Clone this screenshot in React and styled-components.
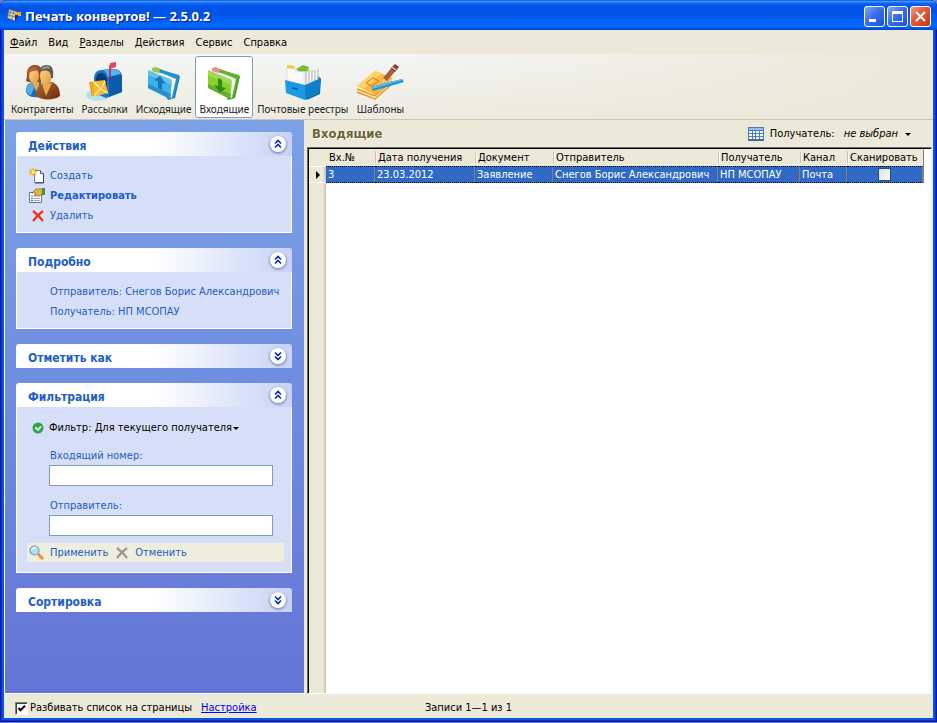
import { useState } from "react";
import styled, { createGlobalStyle } from "styled-components";

const UI_FONT = '"DejaVu Sans Condensed", "DejaVu Sans", sans-serif';
const BEIGE = "#ece9d8";
const LINK_BLUE = "#215dc6";

const GlobalStyle = createGlobalStyle`
  * {
    box-sizing: border-box;
  }
  body {
    margin: 0;
    background: #6f7bc4;
    font-family: ${UI_FONT};
    font-size: 11px;
    line-height: 16px;
    color: #000;
  }
  button, input {
    font: inherit;
    color: inherit;
    margin: 0;
  }
  button {
    border: 0;
    padding: 0;
    background: none;
    white-space: nowrap;
  }
`;

const Window = styled.div`
  display: flex;
  flex-direction: column;
  min-height: calc(100vh - 1px);
  padding: 0 4px 4px;
  border-radius: 7px 7px 0 0;
  overflow: hidden;
  background: #0855dd;
  box-shadow: inset 0 0 0 1px #0019a8, inset 0 0 0 2px #0831d9, inset 0 0 0 3px #0a52e8;
`;

const TitleBar = styled.header`
  display: flex;
  align-items: center;
  gap: 3px;
  height: 30px;
  margin: 0 -4px;
  padding: 2px 6px 0 6px;
  background: linear-gradient(#0a4fd8 0%, #3f95ff 5%, #0a62f5 12%, #0054e3 25%, #0055e8 50%, #0066ff 78%, #0064fa 90%, #0043cf 100%);
`;

const Title = styled.h1`
  flex: 1;
  margin: 0;
  font-family: "Noto Sans", sans-serif;
  font-size: 13px;
  font-weight: bold;
  color: #fff;
  text-shadow: 1px 1px 1px #0a1883;
`;

const Captions = styled.div`
  display: flex;
  gap: 2px;
`;

const CaptionButton = styled.button`
  width: 21px;
  height: 21px;
  border: 1px solid #fff;
  border-radius: 3px;
  background: ${props => props.$close
    ? "linear-gradient(135deg, #f0a088 0%, #e25a34 40%, #c93a10 100%)"
    : "linear-gradient(135deg, #86a8f4 0%, #3a6ef0 45%, #1c4fd8 100%)"};
  svg {
    display: block;
  }
`;

const MenuBar = styled.nav`
  display: flex;
  align-items: center;
  gap: 11px;
  height: 24px;
  padding: 1px 6px 0;
  background: ${BEIGE};
`;

const ToolBar = styled.div`
  display: flex;
  height: 66px;
  padding: 2px 3px 0;
  background: linear-gradient(90deg, rgba(236, 233, 216, 0) 40%, ${BEIGE} 100%), linear-gradient(#f4f5f6, #edebdf);
  border-bottom: 1px solid #c9c6b4;
`;

const ToolButton = styled.button`
  display: flex;
  flex-direction: column;
  align-items: center;
  height: 62px;
  padding: 5px 3px 0;
  border: 1px solid ${props => props.$active ? "#7f9db9" : "transparent"};
  border-radius: 3px;
  background: ${props => props.$active ? "#fff" : "none"};
  font-family: "Noto Sans", sans-serif;
  font-size: 10px;
  line-height: 14px;
  color: #222;
  svg {
    flex: none;
  }
`;

const Body = styled.div`
  flex: 1;
  display: flex;
  background: ${BEIGE};
`;

const Sidebar = styled.aside`
  flex: none;
  display: flex;
  flex-direction: column;
  gap: 15px;
  width: 300px;
  padding: 12px 12px 12px 11px;
  border-left: 1px solid #fff;
  border-bottom: 1px solid #fff;
  background: linear-gradient(#7ba2e7, #6375d6);
`;

const PanelHead = styled.div`
  display: flex;
  align-items: center;
  justify-content: space-between;
  height: 24px;
  padding: 0 6px 0 12px;
  border-radius: 3px 3px 0 0;
  background: linear-gradient(90deg, #fff 50%, #c6d3f7);
`;

const PanelTitle = styled.h2`
  margin: 0;
  padding-top: 3px;
  font-size: 12px;
  font-weight: bold;
  color: ${LINK_BLUE};
`;

const Chevron = styled.button`
  width: 16px;
  height: 16px;
  border-radius: 50%;
  background: #fff;
  box-shadow: 0 1px 2px 1px rgba(80, 90, 150, 0.5);
  svg {
    display: block;
    transform: ${props => props.$open ? "none" : "rotate(180deg)"};
  }
`;

const PanelBody = styled.div`
  padding: 10px 7px 6px 12px;
  border: 1px solid #fff;
  border-top: 0;
  background: #d6dff7;
  color: ${LINK_BLUE};
`;

const TaskLink = styled.a`
  display: grid;
  grid-template-columns: 21px 1fr;
  align-items: center;
  height: 20px;
  color: ${LINK_BLUE};
  font-weight: ${props => props.$bold ? "bold" : "normal"};
  text-decoration: none;
`;

const TaskCross = styled.span`
  display: flex;
  justify-content: center;
  width: 18px;
`;

const Detail = styled.div`
  height: 20px;
  padding-left: 21px;
  line-height: 20px;
  white-space: nowrap;
`;

const FilterButton = styled.button`
  display: grid;
  grid-template-columns: 19px auto auto;
  align-items: center;
  height: 20px;
  margin-top: 1px;
  padding-left: 1px;
  color: #000;
`;

const Field = styled.label`
  display: block;
  padding: 9px 11px 2px 20px;
`;

const TextInput = styled.input`
  display: block;
  width: 100%;
  height: 21px;
  margin-top: 1px;
  padding: 0 3px;
  border: 1px solid #7f9db9;
  background: #fff;
`;

const FieldCaption = styled.span`
  display: block;
  padding: 1px 0 0 1px;
`;

const FilterBar = styled.div`
  display: flex;
  align-items: center;
  gap: 6px;
  height: 19px;
  margin: 5px 0 4px -2px;
  padding: 0 2px;
  background: #efedde;
`;

const BarButton = styled.button`
  display: flex;
  align-items: center;
  gap: 5px;
`;

const Main = styled.main`
  flex: 1;
  display: flex;
  flex-direction: column;
  min-width: 0;
  padding: 0 1px 0 3px;
`;

const MainHead = styled.div`
  display: flex;
  align-items: center;
  height: 27px;
  padding: 0 20px 0 5px;
`;

const MainTitle = styled.h2`
  flex: 1;
  margin: 0;
  font-size: 13px;
  font-weight: bold;
  color: #6b6434;
  text-shadow: 1px 1px 0 #fff;
`;

const Recipient = styled.button`
  display: flex;
  align-items: center;
  gap: 6px;
  em {
    margin-left: 3px;
  }
`;

const GridBox = styled.div`
  flex: 1;
  border: 1px solid;
  border-color: #716f64 #f1efe2 #fff #716f64;
  background: #fff;
`;

const GridInner = styled.div`
  height: 100%;
  border-left: 1px solid #000;
  border-top: 1px solid #000;
  background: linear-gradient(90deg, ${BEIGE} 14px, #c4c1b0 17px, #fff 17px);
`;

const Table = styled.table`
  width: 614px;
  table-layout: fixed;
  border-collapse: separate;
  border-spacing: 0;
  border-right: 1px solid #808080;
  th, td {
    height: 17px;
    padding: 0 0 0 3px;
    font-weight: normal;
    text-align: left;
    white-space: nowrap;
    line-height: 15px;
  }
  thead tr {
    background: ${BEIGE};
  }
  th + th + th {
    background: linear-gradient(#fff, #fff) 1px 2px / 1px 12px no-repeat, linear-gradient(#c8c5b2, #c8c5b2) 0 2px / 1px 12px no-repeat;
  }
`;

const Selector = styled.td`
  border-top: 1px solid #fff;
  border-bottom: 1px solid #fff;
  && {
    padding: 0 0 0 7px;
  }
  svg {
    display: block;
  }
`;

const Cell = styled.td`
  background: #316ac5;
  color: #fff;
  border-top: 1px dotted #000;
  border-bottom: 1px dotted #000;
  border-right: 1px solid #808080;
  && {
    padding-left: ${props => props.$center ? 0 : 2}px;
    text-align: ${props => props.$center ? "center" : "left"};
  }
`;

const ScanBox = styled.input`
  appearance: none;
  display: block;
  width: 13px;
  height: 13px;
  && {
    margin: 0 auto;
  }
  border: 1px solid #1c5180;
  background: linear-gradient(135deg, #dcdcd7, #fff);
`;

const StatusBar = styled.footer`
  display: grid;
  grid-template-columns: 1fr auto 1fr;
  align-items: center;
  height: 24px;
  padding: 4px 11px 0;
  background: ${BEIGE};
`;

const StatusLeft = styled.div`
  display: flex;
  gap: 9px;
  a {
    color: #00f;
  }
`;

const PageToggle = styled.label`
  display: flex;
  align-items: center;
  gap: 2px;
`;

const PageCheck = styled.input`
  appearance: none;
  width: 13px;
  height: 13px;
  border: 1px solid;
  border-color: #808080 #fff #fff #808080;
  box-shadow: inset 1px 1px 0 #404040;
  background: #fff;
  &:checked {
    background: #fff url("data:image/svg+xml,%3Csvg xmlns='http://www.w3.org/2000/svg' viewBox='0 0 11 11'%3E%3Cpath d='M2.5 5l2 2.3L9 2.8' fill='none' stroke='%23000' stroke-width='2'/%3E%3C/svg%3E");
  }
`;

function ContactsIcon() {
  return (
    <svg width="40" height="40" viewBox="0 0 40 40">
      <defs>
        <linearGradient id="suit" x1="0" x2="1" y2="1"><stop stopColor="#b0683a" /><stop offset="1" stopColor="#6b2c0c" /></linearGradient>
        <linearGradient id="skin" x1="0" x2="1" y2="1"><stop stopColor="#ffd88a" /><stop offset="1" stopColor="#e29a3c" /></linearGradient>
      </defs>
      <path d="M4 30c0-6 2-9 6-10l9 0v15c-6 1-13 0-15-5z" fill="#1b6eb4" />
      <path d="M4 29c1-5 3-8 6-9l2 6-3 7c-3-1-4-2-5-4z" fill="#58aee4" />
      <path d="M10 20l7-1v9l-3 1z" fill="#e9a84e" />
      <path d="M4 18c1-2 1-5 1-8 1-5 4-7 8-7 5 0 7 3 7 8v9H7c-2 0-3-1-3-2z" fill="#9c4d22" />
      <ellipse cx="12" cy="14" rx="5" ry="7" fill="url(#skin)" />
      <path d="M6 12c0-5 3-7 7-7l4 4c-4-1-8 0-11 3z" fill="#b9652f" />
      <path d="M14 34c0-7 3-12 7-13l9-1c6 2 8 8 8 14-5 4-18 5-24 0z" fill="url(#suit)" />
      <path d="M20 22l4 12 6-13z" fill="#e9a84e" />
      <ellipse cx="24" cy="14" rx="6" ry="9" fill="url(#skin)" />
      <path d="M17 11c0-5 3-8 8-8 5 0 7 4 6 13h-2c0-4-1-6-3-7-3-1-6-1-9 2z" fill="#5c5d5b" />
      <path d="M19 8c1-3 4-4 7-4 2 1 2 2 2 3-3-1-6 0-9 1z" fill="#94958f" />
    </svg>
  );
}

function MailboxIcon() {
  return (
    <svg width="40" height="40" viewBox="0 0 40 40">
      <ellipse cx="13" cy="33" rx="12" ry="6" fill="#b4e0f4" />
      <path d="M9 17c0-6 3-9 8-9l13-1c5 1 7 4 7 9v14l-16 6-12-5z" fill="#1677c2" />
      <path d="M17 8l13-1c5 1 7 4 7 9v14l-13 5V17c0-5-3-8-7-9z" fill="#0d5ba8" />
      <path d="M18 8l12-1c3 1 5 2 6 5l-13 3c-1-4-3-6-5-7z" fill="#55b4ea" />
      <path d="M11 18c0-4 2-7 5-7s6 3 6 8v12l-11-3z" fill="#083a75" />
      <path d="M4 20l16-2 3 13-16 4z" fill="#f9b72c" />
      <path d="M9 20l7 7 4-8M8 35l7-8 8 4" fill="none" stroke="#fff0b8" strokeWidth="1.2" />
      <path d="M5 20l2 14M7 20l2 14" stroke="#d98d12" strokeWidth=".7" />
      <path d="M25 3v14" stroke="#c6103d" strokeWidth="1.4" />
      <path d="M25 1l6-1v5l-6 2z" fill="#f04066" />
    </svg>
  );
}

function BookIcon({ light, mid, dark, tab, down }) {
  return (
    <svg width="40" height="40" viewBox="0 0 40 40">
      <path d="M8 6l10 2 18 6-5 22-7 2z" fill={dark} />
      <path d="M9 9l24 6-5 21-5-2z" fill="#f5fafc" stroke="#b4c4ca" strokeWidth=".6" />
      <path d="M11 5l10 4 14 4-5 22-2 1 4-19-21-9z" fill={mid} />
      <path d="M8 6l4-1 4 3-1 3-7-2z" fill={tab} />
      <path d="M4 8l22 9c1 0 2 1 2 3l-2 17L4 26z" fill={light} />
      <path d="M4 8l22 9c1 0 2 1 2 3v3L4 13z" fill="#fff" opacity=".2" />
      <path d="M4 22l23 10-1 5L4 26z" fill={mid} />
      <path
        d={down ? "M14 16l4 2v7l4 1-6 5-6-8 4 1z" : "M16 14l6 8-4-1v7l-4-2v-7l-4-1z"}
        fill={down ? "#2f8c1b" : "#1478bd"}
      />
    </svg>
  );
}

function RegistryIcon() {
  return (
    <svg width="40" height="40" viewBox="0 0 40 40">
      <path d="M18 22l17-8 3 3-1 15-13 6z" fill="#0a6eb5" />
      <path d="M21 9l14-2v15l-14 4z" fill="#f3f4f4" />
      <path d="M23 9v15M26 8v15M29 8v14M32 8v13M35 7v13" stroke="#aeb4b8" strokeWidth="1" />
      <path d="M13 7l7-4 6 2-1 4-9 1z" fill="#78bd35" />
      <path d="M4 4l8 1v4l9 1v15H4z" fill="#fafafa" stroke="#c7cacc" strokeWidth=".5" />
      <path d="M4 3l7 1v3l-7-1z" fill="#f8c72c" />
      <path d="M2 18l20 5v15L3 31z" fill="#1c9be4" />
      <path d="M22 23l16-7-2 15-14 7z" fill="#0f7fca" />
      <path d="M9 26l6 1" stroke="#075c99" strokeWidth="1.3" />
    </svg>
  );
}

function TemplatesIcon() {
  return (
    <svg width="48" height="40" viewBox="0 0 48 40">
      <path d="M1 25l1 6 17 7 17-16v-6z" fill="#fff4cc" />
      <path d="M1 27l18 7 17-15M1 30l18 7 17-15" fill="none" stroke="#e69525" strokeWidth="1.5" />
      <path d="M1 24l18-15 18 7-18 17z" fill="#f9b939" />
      <path d="M1 24l18-15 7 2-18 16z" fill="#ffd168" />
      <path d="M10 21l7-5 6 3-7 5z" fill="none" stroke="#c77c16" />
      <path d="M25 22l2-6 10-12 4 3-10 12z" fill="#a95b42" />
      <path d="M35 6l4-4 4 3-4 5z" fill="#8c3b38" />
      <path d="M36 5l4 3" stroke="#e2d2c8" strokeWidth="1.2" />
      <path d="M25 22l2-6 4 3z" fill="#f0cf9e" />
      <path d="M15 25l31-8 2 3-31 9z" fill="#1b94dd" />
      <path d="M15 25l31-8 1 1-31 9z" fill="#58bdf2" />
    </svg>
  );
}

function AppIcon() {
  return (
    <svg width="16" height="16" viewBox="0 0 16 16">
      <path d="M3 1l9 3-3 9-8-3z" fill="#d8d5cc" stroke="#56534f" strokeWidth=".8" />
      <path d="M3 4l7 2M2 7l7 2M5 2L3 9M8 3l-2 8" stroke="#77746e" strokeWidth=".8" />
      <path d="M10 4h5v4h-5z" fill="#f5a72e" />
      <path d="M9 7h3l-3 6z" fill="#222" />
    </svg>
  );
}

function NewIcon() {
  return (
    <svg width="16" height="16" viewBox="0 0 16 16">
      <path d="M5.500 2.500h6l3 3v9h-9z" fill="#fff" stroke="#6f7f9a" />
      <path d="M14.500 6v9H6" fill="none" stroke="#33425c" />
      <path d="M11.500 2.500v3h3" fill="#dde6f3" stroke="#4c5d7c" />
      <path d="M4 0v8M0 4h8M1 1l6 6M7 1L1 7" stroke="#e8bd1c" strokeWidth="1.4" />
      <circle cx="4" cy="4" r="1.500" fill="#fff7b0" />
    </svg>
  );
}

function EditIcon() {
  return (
    <svg width="16" height="16" viewBox="0 0 16 16">
      <path d="M.5 4.500h12v10H.5z" fill="#fff" stroke="#5d7896" />
      <path d="M2 8h2M2 10.500h2M2 12.500h2" stroke="#3b6ca8" />
      <path d="M5 8h6M5 10.500h6M5 12.500h6" stroke="#9aa8b8" />
      <path d="M3 5l4-4 7 0v5l-4 2-2-1-3 1 2-3z" fill="#e9b23c" stroke="#8c641a" strokeWidth=".7" />
      <path d="M13 0h3v7h-3z" fill="#3f8f57" />
    </svg>
  );
}

function CrossIcon({ color }) {
  return (
    <svg width="16" height="16" viewBox="0 0 16 16">
      <path d="M3 3c4 3 7 6 10 10M13 3C9 6 6 9 3 13" fill="none" stroke={color} strokeWidth="2.200" />
    </svg>
  );
}

function OkIcon() {
  return (
    <svg width="16" height="16" viewBox="0 0 16 16">
      <circle cx="8" cy="8" r="5.500" fill="#2fa644" />
      <path d="M5.500 7.500L8 10l3-3.500" fill="none" stroke="#fff" strokeWidth="1.800" />
    </svg>
  );
}

function SearchIcon() {
  return (
    <svg width="16" height="16" viewBox="0 0 16 16">
      <path d="M9 9l5 5" stroke="#f08b3c" strokeWidth="3" />
      <circle cx="5.500" cy="5.500" r="4.500" fill="#a9e2fa" stroke="#7c9db5" strokeWidth="1.200" />
      <path d="M3 5c0-2 2-3 4-2" fill="none" stroke="#fff" strokeWidth="1.200" />
    </svg>
  );
}

function TableIcon() {
  return (
    <svg width="16" height="14" viewBox="0 0 16 14">
      <path d="M0 0h16v14H0z" fill="#4f78bd" />
      <path d="M1 1h14v2H1z" fill="#9dbbea" />
      {[4, 7, 10].map(y => (
        <path key={y} d={`M1 ${y}h3v2H1zM5 ${y}h2v2H5zM8 ${y}h3v2H8zM12 ${y}h3v2h-3z`} fill="#f1f6ff" />
      ))}
      <path d="M1 13h14" stroke="#305899" />
    </svg>
  );
}

function DropArrow() {
  return (
    <svg width="8" height="8" viewBox="0 0 8 8">
      <path d="M1 3h6L4 6z" fill="#000" />
    </svg>
  );
}

function Panel({ title, open: initiallyOpen = false, children }) {
  const [open, setOpen] = useState(initiallyOpen);
  return (
    <section>
      <PanelHead>
        <PanelTitle>{title}</PanelTitle>
        <Chevron type="button" $open={open} aria-label={title} aria-expanded={open} onClick={() => setOpen(!open)}>
          <svg width="16" height="16" viewBox="0 0 16 16">
            <path d="M5 7.500l3-3 3 3M5 11.500l3-3 3 3" fill="none" stroke="#00309c" strokeWidth="1.600" />
          </svg>
        </Chevron>
      </PanelHead>
      {open && children && <PanelBody>{children}</PanelBody>}
    </section>
  );
}

const sections = [
  { name: "Контрагенты", icon: <ContactsIcon /> },
  { name: "Рассылки", icon: <MailboxIcon /> },
  { name: "Исходящие", icon: <BookIcon light="#40b2e8" mid="#2490d0" dark="#1a79b8" tab="#9ccc3c" /> },
  { name: "Входящие", icon: <BookIcon light="#8bcf2e" mid="#62b32c" dark="#3f9423" tab="#ef8b9c" down /> },
  { name: "Почтовые реестры", icon: <RegistryIcon /> },
  { name: "Шаблоны", icon: <TemplatesIcon /> },
];

const columns = [
  { name: "Вх.№", width: 49 },
  { name: "Дата получения", width: 100 },
  { name: "Документ", width: 78 },
  { name: "Отправитель", width: 165 },
  { name: "Получатель", width: 82 },
  { name: "Канал", width: 47 },
  { name: "Сканировать", width: 76 },
];

const letters = [
  ["3", "23.03.2012", "Заявление", "Снегов Борис Александрович", "НП МСОПАУ", "Почта"],
];

function App() {
  const [section, setSection] = useState("Входящие");

  return (
    <>
      <GlobalStyle />
      <Window>
        <TitleBar>
          <AppIcon />
          <Title>Печать конвертов! — 2.5.0.2</Title>
          <Captions>
            <CaptionButton type="button" aria-label="Свернуть">
              <svg width="19" height="19"><path d="M4 12h7v3H4z" fill="#fff" /></svg>
            </CaptionButton>
            <CaptionButton type="button" aria-label="Развернуть">
              <svg width="19" height="19"><path d="M4 4h11v11H4zM5 7v7h9V7z" fill="#fff" fillRule="evenodd" /></svg>
            </CaptionButton>
            <CaptionButton type="button" aria-label="Закрыть" $close>
              <svg width="19" height="19"><path d="M5 5l9 9M14 5l-9 9" stroke="#fff" strokeWidth="2.200" /></svg>
            </CaptionButton>
          </Captions>
        </TitleBar>

        <MenuBar>
          <button type="button"><u>Ф</u>айл</button>
          <button type="button">Вид</button>
          <button type="button"><u>Р</u>азделы</button>
          <button type="button">Действия</button>
          <button type="button">Сервис</button>
          <button type="button">Справка</button>
        </MenuBar>

        <ToolBar>
          {sections.map(({ name, icon }) => (
            <ToolButton key={name} type="button" $active={name === section} onClick={() => setSection(name)}>
              {icon}
              {name}
            </ToolButton>
          ))}
        </ToolBar>

        <Body>
          <Sidebar>
            <Panel title="Действия" open>
              <TaskLink href="#new"><NewIcon />Создать</TaskLink>
              <TaskLink href="#edit" $bold><EditIcon />Редактировать</TaskLink>
              <TaskLink href="#delete"><TaskCross><CrossIcon color="#f0301c" /></TaskCross>Удалить</TaskLink>
            </Panel>
            <Panel title="Подробно" open>
              <Detail>Отправитель: Снегов Борис Александрович</Detail>
              <Detail>Получатель: НП МСОПАУ</Detail>
            </Panel>
            <Panel title="Отметить как" />
            <Panel title="Фильтрация" open>
              <FilterButton type="button"><OkIcon />Фильтр: Для текущего получателя <DropArrow /></FilterButton>
              <Field>
                <FieldCaption>Входящий номер:</FieldCaption>
                <TextInput type="text" />
              </Field>
              <Field>
                <FieldCaption>Отправитель:</FieldCaption>
                <TextInput type="text" />
              </Field>
              <FilterBar>
                <BarButton type="button"><SearchIcon />Применить</BarButton>
                <BarButton type="button"><CrossIcon color="#9a9a94" />Отменить</BarButton>
              </FilterBar>
            </Panel>
            <Panel title="Сортировка" />
          </Sidebar>

          <Main>
            <MainHead>
              <MainTitle>{section}</MainTitle>
              <Recipient type="button">
                <TableIcon />
                Получатель: <em>не выбран</em>
                <DropArrow />
              </Recipient>
            </MainHead>
            <GridBox>
              <GridInner>
                <Table>
                  <colgroup>
                    <col style={{ width: 17 }} />
                    {columns.map(({ name, width }) => <col key={name} style={{ width }} />)}
                  </colgroup>
                  <thead>
                    <tr>
                      <th />
                      {columns.map(({ name }) => <th key={name}>{name}</th>)}
                    </tr>
                  </thead>
                  <tbody>
                    {letters.map(letter => (
                      <tr key={letter[0]}>
                        <Selector>
                          <svg width="5" height="8"><path d="M0 0l4 4-4 4z" fill="#000" /></svg>
                        </Selector>
                        {letter.map(value => <Cell key={value}>{value}</Cell>)}
                        <Cell $center><ScanBox type="checkbox" aria-label="Сканировать" /></Cell>
                      </tr>
                    ))}
                  </tbody>
                </Table>
              </GridInner>
            </GridBox>
          </Main>
        </Body>

        <StatusBar>
          <StatusLeft>
            <PageToggle>
              <PageCheck type="checkbox" defaultChecked />
              Разбивать список на страницы
            </PageToggle>
            <a href="#settings">Настройка</a>
          </StatusLeft>
          <span>Записи 1—1 из 1</span>
        </StatusBar>
      </Window>
    </>
  );
}

export default App;
